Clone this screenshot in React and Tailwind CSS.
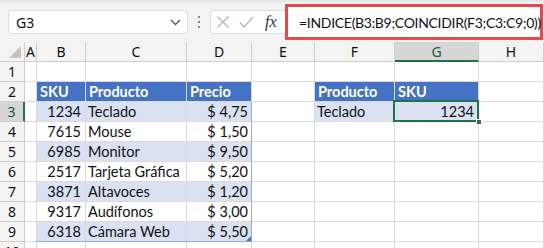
import React from 'react';

const COLS = ['A', 'B', 'C', 'D', 'E', 'F', 'G', 'H'];

const PRODUCTS = [
        { sku: '1234', name: 'Teclado', price: '$ 4,75' },
        { sku: '7615', name: 'Mouse', price: '$ 1,50' },
        { sku: '6985', name: 'Monitor', price: '$ 9,50' },
        { sku: '2517', name: 'Tarjeta Gráfica', price: '$ 5,20' },
        { sku: '3871', name: 'Altavoces', price: '$ 1,20' },
        { sku: '9317', name: 'Audífonos', price: '$ 3,00' },
        { sku: '6318', name: 'Cámara Web', price: '$ 5,50' },
];

const cellBase = 'h-[20px] border-r border-b border-[#dadada] flex items-center overflow-visible whitespace-nowrap';

// builds the cells for one sheet row
const buildRow = (row) => {
        const cells = Array(8).fill(null).map(() => ({ text: '', cls: '' }));
        const item = row >= 3 && row <= 9 ? PRODUCTS[row - 3] : null;
        const band = row % 2 === 1 ? 'bg-[#d9e1f2]' : 'bg-white';

        if (row === 2) {
                const head = 'bg-[#4472c4] text-white font-bold px-[3px] border-[#8ea9db]';
                cells[1] = { text: 'SKU', cls: head };
                cells[2] = { text: 'Producto', cls: head };
                cells[3] = { text: 'Precio', cls: head };
                cells[5] = { text: 'Producto', cls: head };
                cells[6] = { text: 'SKU', cls: head };
        }
        if (item) {
                cells[1] = { text: item.sku, cls: `${band} justify-end pr-[4px] border-[#b4c6e7]` };
                cells[2] = { text: item.name, cls: `${band} pl-[2px] border-[#b4c6e7]` };
                cells[3] = { text: item.price, cls: `${band} justify-end pr-[3px] border-[#b4c6e7] border-r-[#8ea9db]` };
        }
        if (row === 3) {
                cells[5] = { text: 'Teclado', cls: 'bg-[#d9e1f2] pl-[2px] border-[#b4c6e7]' };
                cells[6] = { text: '1234', cls: 'bg-[#d9e1f2] justify-end pr-[4px] border-[#b4c6e7] relative' };
        }
        if (row === 9) {
                cells[1].cls += ' border-b-[#8ea9db]';
                cells[2].cls += ' border-b-[#8ea9db]';
                cells[3].cls += ' border-b-[#8ea9db] relative';
        }
        return cells;
};

const App = () => {
        const rows = Array.from({ length: 10 }, (_, i) => i + 1);

        return (
                <div className="w-[544px] h-[248px] overflow-hidden bg-white text-[#111] font-['Lato','Liberation_Sans',sans-serif] text-[14.5px]">
                        {/* Toolbar */}
                        <div className="relative h-[42px] bg-[#f3f3f3] border-t-[2px] border-[#e6e6e6] flex items-start px-[8px] pt-[8px]">
                                <div className="w-[180px] h-[24px] bg-white border border-[#dcdcdc] rounded-[4px] flex items-center justify-between pl-[7px] pr-[6px] font-['Noto_Sans','Open_Sans',sans-serif] text-[14px]">
                                        <span>G3</span>
                                        <svg width="11" height="7" viewBox="0 0 11 7" fill="none" stroke="#555" strokeWidth="1.3">
                                                <path d="M1 1l4.5 4.5L10 1" />
                                        </svg>
                                </div>
                                <div className="w-[22px] h-[24px] flex flex-col items-center justify-center gap-[3px]">
                                        <span className="w-[2px] h-[2px] bg-[#8a8a8a]" />
                                        <span className="w-[2px] h-[2px] bg-[#8a8a8a]" />
                                        <span className="w-[2px] h-[2px] bg-[#8a8a8a]" />
                                </div>
                                <div className="flex-1 h-[24px] bg-white border border-[#dcdcdc] rounded-[4px] flex items-center pl-[5px]">
                                        <svg width="14" height="14" viewBox="0 0 14 14" fill="none" stroke="#b5b5b5" strokeWidth="1.2">
                                                <path d="M1.5 1.5l11 11M12.5 1.5l-11 11" />
                                        </svg>
                                        <svg className="ml-[9px]" width="15" height="12" viewBox="0 0 15 12" fill="none" stroke="#b5b5b5" strokeWidth="1.2">
                                                <path d="M1 6.5l4 4.5L14 1" />
                                        </svg>
                                        <span className="ml-[11px] font-['Liberation_Serif',serif] italic text-[16px] text-[#333]">fx</span>
                                </div>
                                <div className="absolute left-[285px] top-[2px] w-[258px] h-[36px] border-[3px] border-[#e8474b] bg-white flex items-center pl-[11px] font-['Lato','Liberation_Sans',sans-serif] text-[14px] tracking-[-0.3px] whitespace-nowrap">
                                        =INDICE(B3:B9;COINCIDIR(F3;C3:C9;0))
                                </div>
                        </div>

                        {/* Sheet grid */}
                        <div className="grid grid-cols-[25px_12px_49px_101px_65px_63px_80px_84px_1fr]">
                                {/* column header row */}
                                <div className="h-[20px] bg-[#f3f3f3] border-r border-b border-[#cfcfcf] flex items-end justify-end p-[3px]">
                                        <svg width="12" height="12" viewBox="0 0 12 12">
                                                <path d="M12 0v12H0z" fill="#c4c4c4" />
                                        </svg>
                                </div>
                                {COLS.map((c) => (
                                        <div
                                                key={c}
                                                className={
                                                        c === 'G'
                                                                ? 'h-[20px] bg-[#d6d6d6] border-r border-b-[2px] border-r-[#cfcfcf] border-b-[#217346] flex items-center justify-center text-[#185c37] text-[14px] font-["Noto_Sans",sans-serif]'
                                                                : 'h-[20px] bg-[#f3f3f3] border-r border-b border-[#cfcfcf] flex items-center justify-center text-[14px] font-["Noto_Sans",sans-serif]'
                                                }
                                        >
                                                {c}
                                        </div>
                                ))}

                                {rows.map((r) => {
                                        const cells = buildRow(r);
                                        return (
                                                <React.Fragment key={r}>
                                                        <div
                                                                className={
                                                                        r === 3
                                                                                ? 'h-[20px] bg-[#d6d6d6] border-r-[2px] border-b border-r-[#217346] border-b-[#cfcfcf] flex items-center justify-center text-[#185c37] text-[14px] font-["Noto_Sans",sans-serif]'
                                                                                : 'h-[20px] bg-[#f3f3f3] border-r border-b border-[#cfcfcf] flex items-center justify-center text-[14px] font-["Noto_Sans",sans-serif]'
                                                                }
                                                        >
                                                                {r}
                                                        </div>
                                                        {cells.map((cell, ci) => (
                                                                <div key={ci} className={`${cellBase} ${cell.cls}`}>
                                                                        {cell.text}
                                                                        {r === 3 && ci === 6 && (
                                                                                <>
                                                                                        <span className="absolute left-[-2px] top-[-2px] right-[-1px] bottom-[-1px] border-[2px] border-[#217346] pointer-events-none" />
                                                                                        <span className="absolute right-[-4px] bottom-[-4px] w-[6px] h-[6px] bg-[#217346] border border-white" />
                                                                                </>
                                                                        )}
                                                                        {r === 9 && ci === 3 && (
                                                                                <svg className="absolute right-[0px] bottom-[0px]" width="5" height="5" viewBox="0 0 5 5">
                                                                                        <path d="M5 0v5H0z" fill="#4472c4" />
                                                                                </svg>
                                                                        )}
                                                                </div>
                                                        ))}
                                                </React.Fragment>
                                        );
                                })}
                        </div>
                </div>
        );
};

export default App;
